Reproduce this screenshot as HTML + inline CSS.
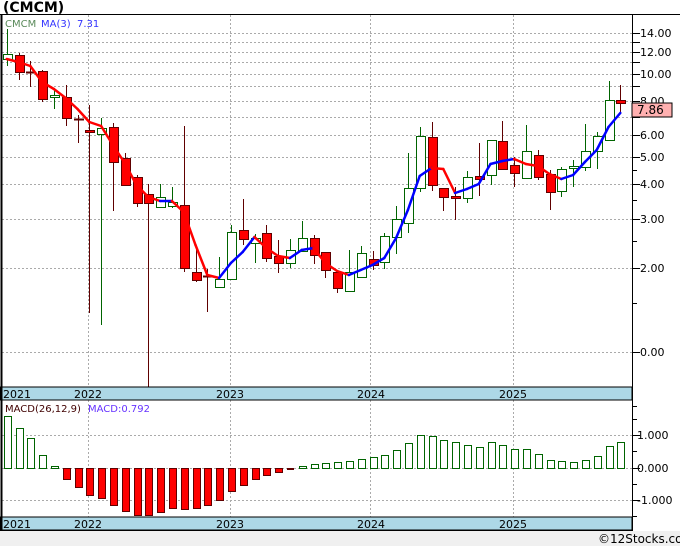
<!DOCTYPE html>
<html><head><meta charset="utf-8"><style>
html,body{margin:0;padding:0;background:#fff;}
body{width:680px;height:546px;overflow:hidden;font-family:"Liberation Sans",sans-serif;}
svg text{font-family:"DejaVu Sans","Liberation Sans",sans-serif;}
</style></head><body>
<svg id="s" width="680" height="546" xmlns="http://www.w3.org/2000/svg" shape-rendering="crispEdges">
<rect x="0" y="0" width="680" height="546" fill="#fff"/>
<rect x="0" y="531" width="680" height="15" fill="#f0f0f0"/>
<text x="3" y="12" font-size="14" font-weight="bold" fill="#000" font-family="Liberation Sans">(CMCM)</text>
<g id="grid"></g>
<g id="candles"></g>
<g id="ma" shape-rendering="auto"></g>
<g id="macd"></g>
<rect x="0" y="387" width="632" height="13" fill="#add8e6" stroke="#000" stroke-width="1"/>
<rect x="0" y="517" width="632" height="13" fill="#add8e6" stroke="#000" stroke-width="1"/>
<line x1="0" y1="14.5" x2="680" y2="14.5" stroke="#000"/>
<line x1="1.5" y1="14" x2="1.5" y2="531" stroke="#000" stroke-width="2"/>
<line x1="632.5" y1="14" x2="632.5" y2="531" stroke="#000"/>
<line x1="0" y1="530.5" x2="632" y2="530.5" stroke="#000"/>
<g font-size="11" fill="#000">
<text x="3" y="398">2021</text><text x="74" y="398">2022</text><text x="216" y="398">2023</text><text x="357" y="398">2024</text><text x="499" y="398">2025</text>
<text x="3" y="528">2021</text><text x="74" y="528">2022</text><text x="216" y="528">2023</text><text x="357" y="528">2024</text><text x="499" y="528">2025</text>
</g>
<text x="5" y="27" font-size="10" fill="#5a8a5a">CMCM</text>
<text x="41" y="27" font-size="10" fill="#3333ff">MA(3)</text>
<text x="77" y="27" font-size="10" fill="#3333ff">7.31</text>
<text x="5" y="412" font-size="10" fill="#400000">MACD(26,12,9)</text>
<text x="88" y="412" font-size="10" fill="#6633ff">MACD:0.792</text>
<g id="axis" font-size="11" fill="#000"></g>
<rect x="632" y="103" width="40" height="14" fill="#ffb0b0" stroke="#000"/>
<text x="637" y="114" font-size="12" fill="#000">7.86</text>
<text x="598" y="543" font-size="12" fill="#000" font-family="Liberation Sans">©12Stocks.com</text>
</svg>
<script>
var NS="http://www.w3.org/2000/svg";
function el(p,t,a){var e=document.createElementNS(NS,t);for(var k in a)e.setAttribute(k,a[k]);p.appendChild(e);return e;}
var g=document.getElementById('grid'),c=document.getElementById('candles'),m=document.getElementById('ma'),md=document.getElementById('macd'),ax=document.getElementById('axis');
function py(v){return 268-120.8*Math.log(v/2);}
[14,13,12,11,10,9,8,7,6,5,4,3,2,1].forEach(function(v){var y=Math.round(py(v))+.5;
el(g,'line',{x1:2,y1:y,x2:632,y2:y,stroke:'#aaa','stroke-dasharray':'2,2'});
el(ax,'line',{x1:632,y1:y,x2:640,y2:y,stroke:'#000'});});
[[14,'14.00'],[12,'12.00'],[10,'10.00'],[8,'8.00'],[6,'6.00'],[5,'5.00'],[4,'4.00'],[3,'3.00'],[2,'2.00'],[1,'0.00']].forEach(function(a){var t=el(ax,'text',{x:640,y:Math.round(py(a[0]))+4});t.textContent=a[1];});
[4.5,3.5,2.5,1.5].forEach(function(v){var y=Math.round(py(v))+.5;el(ax,'line',{x1:632,y1:y,x2:637,y2:y,stroke:'#000'});});
[88,230,370,513].forEach(function(x){el(g,'line',{x1:x+.5,y1:15,x2:x+.5,y2:387,stroke:'#aaa','stroke-dasharray':'2,2'});el(g,'line',{x1:x+.5,y1:400,x2:x+.5,y2:517,stroke:'#aaa','stroke-dasharray':'2,2'});});
[435,468,500].forEach(function(y){el(g,'line',{x1:2,y1:y+.5,x2:632,y2:y+.5,stroke:'#aaa','stroke-dasharray':'2,2'});el(ax,'line',{x1:632,y1:y+.5,x2:640,y2:y+.5,stroke:'#000'});});
[406,419,451,484,516].forEach(function(y){el(ax,'line',{x1:632,y1:y+.5,x2:637,y2:y+.5,stroke:'#000'});});
[[435,' 1.000'],[468,' 0.000'],[500,'-1.000']].forEach(function(a){var t=el(ax,'text',{x:637,y:a[0]+4});t.textContent=a[1];});
var D=[[1,54,59,29,66],[0,55,72,53,80],[2,72,72,61,87],[0,71,99,70,102],[1,95,97,88,109],[0,97,118,85,126],[2,119,119,115,143],[0,130,132,105,313],[1,128,134,118,325],[0,127,162,123,211],[0,158,185,153,185],[0,177,203,175,207],[0,194,203,184,387],[1,197,207,184,208],[1,202,206,187,208],[0,205,268,126,272],[0,272,280,247,282],[2,276,276,269,312],[1,279,287,257,287],
[1,232,279,225,279],[0,230,239,199,245],[1,238,243,234,263],[0,233,258,225,262],[0,256,263,240,273],[1,250,263,239,268],[1,238,251,221,251],[0,238,255,235,264],[0,252,270,252,278],[0,272,288,272,293],[1,272,291,250,292],[1,253,277,246,277],[0,259,265,251,270],[1,236,262,233,269],[1,219,237,206,254],[1,188,223,153,233],[1,136,188,127,192],[0,137,185,122,191],[0,188,197,188,211],[0,196,198,187,220],[1,177,198,171,203],[0,176,179,143,196],[1,140,175,140,185],[0,141,169,121,170],[0,165,173,157,187],[1,151,178,125,178],[0,155,177,150,180],[0,174,192,170,210],[1,169,191,167,197],[1,166,168,160,187],[1,151,167,124,171],[1,136,151,132,169],[1,100,140,81,140],[0,100,103,85,113]];
D.forEach(function(d,i){var x=Math.round(6.7+11.8*i);var col=d[0]==1?'#006400':'#600000';
el(c,'line',{x1:x+.5,y1:d[3],x2:x+.5,y2:d[4],stroke:col});
if(d[0]==2){el(c,'line',{x1:x-4,y1:d[1]+.5,x2:x+6,y2:d[1]+.5,stroke:col,'stroke-width':2});}
else el(c,'rect',{x:x-4+.5,y:d[1]+.5,width:9,height:Math.max(2,d[2]-d[1]),fill:d[0]==1?'#fff':'#ff0000',stroke:d[0]==1?'#006400':'#600000'});});
var MA=[59,62,66,82,89,98,109,122,126,145,163,185,197,201,201,212,245,275,278,263,252,237,248,256,258,250,248,263,271,275,270,265,258,238,210,176,168,169,193,189,184,164,161,159,164,166,174,179,175,162,150,127,113];
for(var i=0;i<MA.length-1;i++){var x1=6.7+11.8*i,x2=x1+11.8;el(m,'line',{x1:x1,y1:MA[i],x2:x2,y2:MA[i+1],stroke:MA[i+1]>MA[i]?'#ff0000':'#0000ff','stroke-width':2.5,'stroke-linecap':'round'});}
var H=[416,428,438,455,466,479,487,495,498,505,511,515,515,512,508,509,508,505,500,491,485,479,475,472,469,466,464,463,462,461,459,457,455,450,443,435,436,440,442,445,447,442,445,449,449,454,460,461,462,460,456,446,442];
H.forEach(function(h,i){var x=Math.round(6.7+11.8*i)-3;
if(h<468)el(md,'rect',{x:x+.5,y:h+.5,width:7,height:468-h,fill:'#fff',stroke:'#006400'});
else if(h-468<3)el(md,'rect',{x:x,y:468,width:7,height:2,fill:'#600000'});
else el(md,'rect',{x:x+.5,y:468.5,width:7,height:h-468,fill:'#ff0000',stroke:'#600000'});});
</script>
</body></html>
